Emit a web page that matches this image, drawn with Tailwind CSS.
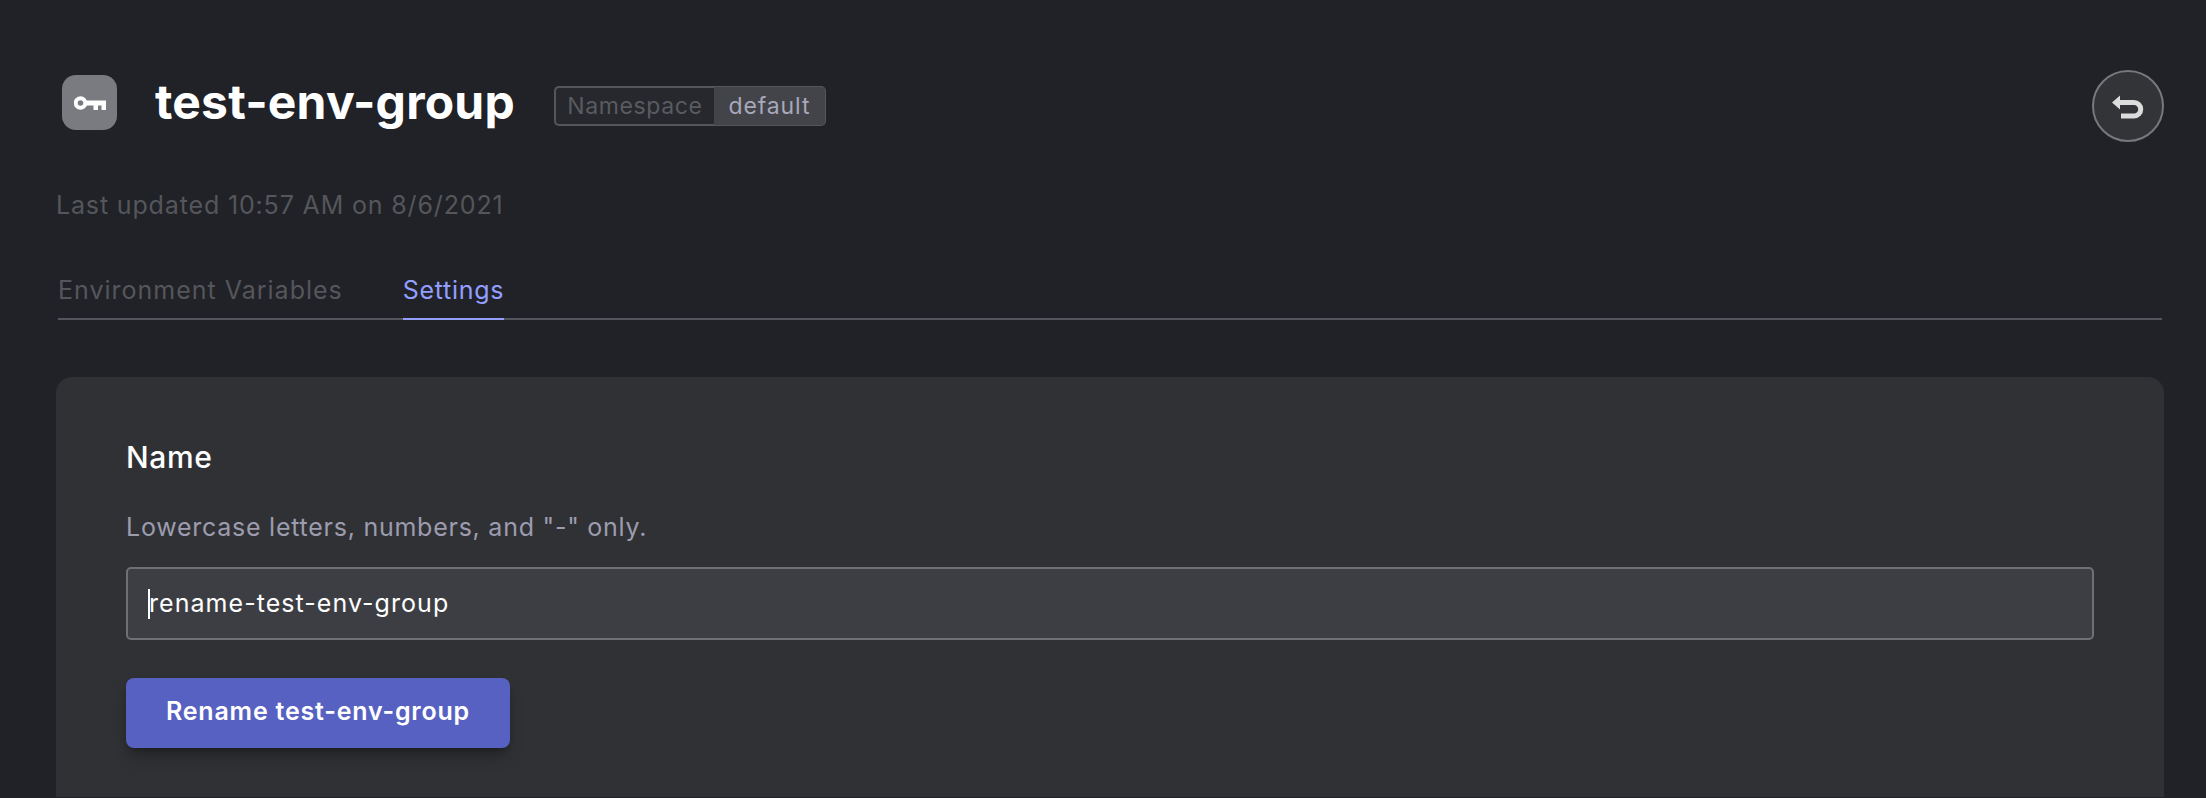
<!DOCTYPE html>
<html lang="en" class="h-[798px] overflow-hidden">
<head>
  <meta charset="UTF-8">
  <title>test-env-group</title>
  <script src="https://cdn.jsdelivr.net/npm/@tailwindcss/browser@4"></script>
</head>
<body class="h-[798px] overflow-hidden bg-[#202227] font-['Inter',sans-serif] text-white">
  <main class="pt-[70px] pr-[42px] pl-14">
    <!-- title row -->
    <header class="flex h-[72px] items-center">
      <div class="-mt-[7px] ml-[6px] flex h-[55px] w-[55px] items-center justify-center rounded-[14px] bg-[#7a7b80]">
        <svg class="h-[14px] w-8 text-white" fill="currentColor" viewBox="0 0 32 14" aria-hidden="true">
          <circle cx="6.500" cy="7" r="4.800" fill="none" stroke="currentColor" stroke-width="4"></circle>
          <rect x="11" y="4.500" width="21" height="5"></rect>
          <rect x="19.500" y="7" width="4.500" height="7"></rect>
          <rect x="27.500" y="7" width="4.500" height="7"></rect>
        </svg>
      </div>
      <h1 class="-mt-[9px] ml-[38px] text-[48px] leading-none font-bold tracking-[0.2px]">test-env-group</h1>
      <div class="ml-[39px] flex h-10 text-[23px] leading-none tracking-[0.6px]">
        <span class="flex w-[160px] items-center justify-center rounded-l-[5px] border-2 border-r-0 border-[#55565b] bg-[#26282d] text-[#5a5b61]">Namespace</span>
        <span class="flex w-[112px] items-center justify-center rounded-r-[5px] border border-l-0 border-[#55565b] bg-[#43444a] tracking-[0.9px] text-[#a8a8bb]">default</span>
      </div>
      <button class="ml-auto flex h-[72px] w-[72px] items-center justify-center rounded-full border-2 border-[#77787c] bg-[#333438]">
        <svg class="h-10 w-10 text-[#dcdcdc]" fill="none" stroke="currentColor" stroke-width="5" viewBox="0 0 40 40" aria-hidden="true">
          <path d="M9 16.500H26a6.750 6.750 0 0 1 0 13.500H13"></path>
          <path d="M4 16.500l8-7v14z" fill="currentColor" stroke="none"></path>
        </svg>
      </button>
    </header>

    <p class="mt-[47px] text-[25px] leading-[32px] tracking-[0.85px] text-[#55565c]">Last updated 10:57 AM on 8/6/2021</p>

    <!-- tabs -->
    <nav class="mx-[2px] mt-[53px] flex gap-[60px] border-b-2 border-[#53555c] text-[25px] leading-[32px]">
      <span class="pb-[12px] tracking-[1px] text-[#55565c]">Environment Variables</span>
      <span class="-mb-[2px] border-b-2 border-[#949eff] pb-[12px] tracking-[0.7px] text-[#949eff]">Settings</span>
    </nav>

    <section class="mt-[57px] h-[420px] rounded-t-2xl bg-[#303135] px-[70px] pt-[62px]">
      <h2 class="text-[30px] leading-[36px] font-medium tracking-[0.6px]">Name</h2>
      <p class="mt-[36px] text-[25px] leading-[32px] tracking-[0.75px] text-[#9c9cae]">Lowercase letters, numbers, and "-" only.</p>
      <div class="relative mt-[24px]">
        <input type="text" value="rename-test-env-group" class="h-[73px] w-full rounded-[5px] border-2 border-[#6f7074] bg-[#3d3e43] px-[21px] pb-[2px] text-[25px] tracking-[1.05px] text-white outline-none">
        <span class="absolute top-[22px] left-[22px] h-[30px] w-[2px] bg-white"></span>
      </div>
      <button class="mt-[38px] h-[70px] w-[384px] rounded-[8px] bg-[#5761c2] pb-[2px] text-[25px] font-semibold tracking-[0.8px] text-white shadow-lg shadow-black/30">Rename test-env-group</button>
    </section>
  </main>
</body>
</html>
